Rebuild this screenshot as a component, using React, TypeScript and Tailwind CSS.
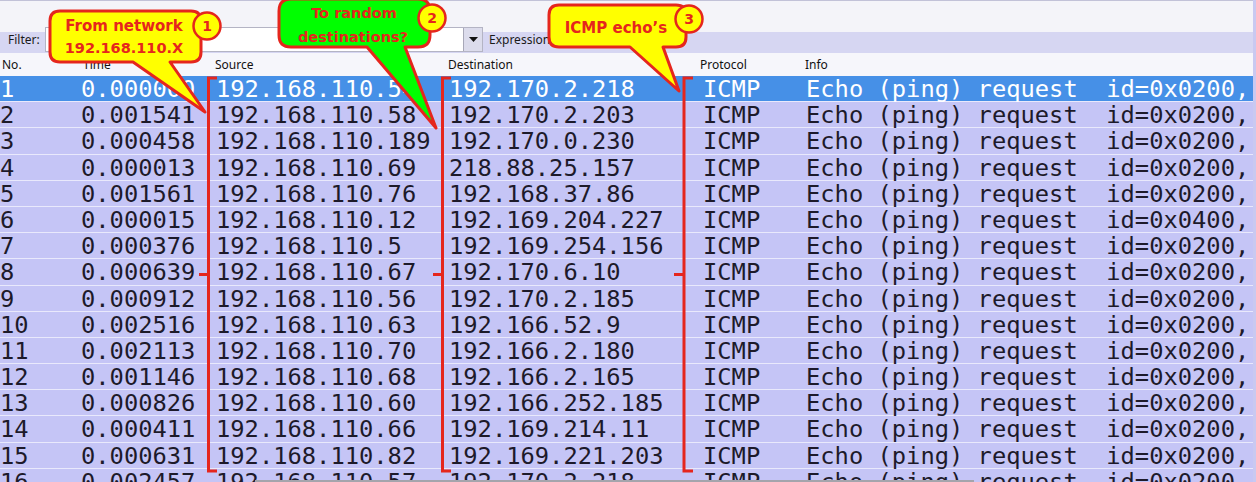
import React from "react";

interface Packet {
  no: number;
  time: string;
  source: string;
  destination: string;
  id: string;
}

const packets: Packet[] = [
  { no: 1, time: "0.000000", source: "192.168.110.54", destination: "192.170.2.218", id: "0x0200" },
  { no: 2, time: "0.001541", source: "192.168.110.58", destination: "192.170.2.203", id: "0x0200" },
  { no: 3, time: "0.000458", source: "192.168.110.189", destination: "192.170.0.230", id: "0x0200" },
  { no: 4, time: "0.000013", source: "192.168.110.69", destination: "218.88.25.157", id: "0x0200" },
  { no: 5, time: "0.001561", source: "192.168.110.76", destination: "192.168.37.86", id: "0x0200" },
  { no: 6, time: "0.000015", source: "192.168.110.12", destination: "192.169.204.227", id: "0x0400" },
  { no: 7, time: "0.000376", source: "192.168.110.5", destination: "192.169.254.156", id: "0x0200" },
  { no: 8, time: "0.000639", source: "192.168.110.67", destination: "192.170.6.10", id: "0x0200" },
  { no: 9, time: "0.000912", source: "192.168.110.56", destination: "192.170.2.185", id: "0x0200" },
  { no: 10, time: "0.002516", source: "192.168.110.63", destination: "192.166.52.9", id: "0x0200" },
  { no: 11, time: "0.002113", source: "192.168.110.70", destination: "192.166.2.180", id: "0x0200" },
  { no: 12, time: "0.001146", source: "192.168.110.68", destination: "192.166.2.165", id: "0x0200" },
  { no: 13, time: "0.000826", source: "192.168.110.60", destination: "192.166.252.185", id: "0x0200" },
  { no: 14, time: "0.000411", source: "192.168.110.66", destination: "192.169.214.11", id: "0x0200" },
  { no: 15, time: "0.000631", source: "192.168.110.82", destination: "192.169.221.203", id: "0x0200" },
  { no: 16, time: "0.002457", source: "192.168.110.57", destination: "192.170.2.218", id: "0x0200" },
];

const RED = "#e5261d";

// annotation layer: speech bubbles, number badges and brackets
const Annotations = () => (
  <svg
    className="absolute inset-0 pointer-events-none"
    width={1256}
    height={482}
    viewBox="0 0 1256 482"
  >
    {/* brackets */}
    <g stroke={RED} strokeWidth={3} fill="none">
      <path d="M217 78 H208.5 V471 H217" />
      <path d="M199 274.5 H208.5" />
      <path d="M451 78 H442.5 V471 H451" />
      <path d="M433 274.5 H442.5" />
      <path d="M693 78 H684 V471 H693" />
      <path d="M674 274.5 H684" />
    </g>

    {/* bubble 1 */}
    <path
      d="M60 11 H191 Q201 11 201 21 V52 Q201 62 191 62 H170 L205 112 L133 62 H60 Q50 62 50 52 V21 Q50 11 60 11 Z"
      fill="#ffff00"
      stroke={RED}
      strokeWidth={3}
      strokeLinejoin="round"
    />
    {/* bubble 2 */}
    <path
      d="M291 -1 H418 Q430 -1 430 11 V35 Q430 47 418 47 H405 L436 128 L367 47 H291 Q279 47 279 35 V11 Q279 -1 291 -1 Z"
      fill="#00ff00"
      stroke={RED}
      strokeWidth={3}
      strokeLinejoin="round"
    />
    {/* bubble 3 */}
    <path
      d="M559 5 H676 Q686 5 686 15 V37 Q686 47 676 47 H663 L679 91 L630 47 H559 Q549 47 549 37 V15 Q549 5 559 5 Z"
      fill="#ffff00"
      stroke={RED}
      strokeWidth={3}
      strokeLinejoin="round"
    />

    <g
      fill={RED}
      fontFamily="'DejaVu Sans', sans-serif"
      fontWeight="bold"
      textAnchor="middle"
    >
      <text x={124} y={31} fontSize={15}>From network</text>
      <text x={124} y={53} fontSize={14.5}>192.168.110.X</text>
      <text x={354} y={18} fontSize={14.5}>To random</text>
      <text x={353} y={42} fontSize={14.5}>destinations?</text>
      <text x={616} y={33} fontSize={15}>ICMP echo’s</text>
    </g>

    {/* number badges */}
    {[
      { n: "1", x: 207, y: 26 },
      { n: "2", x: 432, y: 18 },
      { n: "3", x: 689, y: 19 },
    ].map((b) => (
      <g key={b.n}>
        <circle cx={b.x} cy={b.y} r={13.5} fill="#ffff00" stroke={RED} strokeWidth={2.5} />
        <text
          x={b.x}
          y={b.y + 5}
          fill={RED}
          fontFamily="'DejaVu Sans', sans-serif"
          fontWeight="bold"
          fontSize={14}
          textAnchor="middle"
        >
          {b.n}
        </text>
      </g>
    ))}
  </svg>
);

const App = () => {
  return (
    <div className="relative w-[1256px] h-[482px] overflow-hidden bg-[#f4f4f9] font-['Noto_Sans',sans-serif]">
      {/* TOP BAND */}
      <div className="h-[27px] border-t border-[#c2c2d8]" />

      {/* FILTER BAR */}
      <div className="h-[26px] flex items-start bg-[linear-gradient(to_bottom,#f4f4f9_5px,#d6d6f2_5px)]">
        <span className="w-[45px] pl-[8px] pt-[6px] text-[12px] leading-[14px] text-[#1a1a1a]">
          Filter:
        </span>
        <div className="w-[438px] h-[25px] flex bg-white border border-[#b4b4c4]">
          <div className="flex-1" />
          <div className="w-[19px] h-full flex items-center justify-center bg-[#dcdcec] border-l border-[#a8a8b8]">
            <svg width="9" height="6" viewBox="0 0 9 6">
              <path d="M0 0 H9 L4.5 5 Z" fill="#111" />
            </svg>
          </div>
        </div>
        <span className="pl-[6px] pt-[6px] text-[12px] leading-[14px] text-[#1a1a1a]">
          Expression...
        </span>
        <span className="pl-[60px] pt-[6px] text-[12px] leading-[14px] text-[#a0a0b0]">
          Clear
        </span>
      </div>

      {/* HEADER */}
      <div className="h-[23px] flex items-center bg-[#f6f6fb] text-[12px] text-[#111]">
        <div className="w-[81px] pl-[2px]">No.</div>
        <div className="w-[133px] pl-[2px]">Time</div>
        <div className="w-[232px] pl-[1px]">Source</div>
        <div className="w-[252px] pl-[2px]">Destination</div>
        <div className="w-[105px] pl-[2px]">Protocol</div>
        <div className="flex-1 pl-[2px]">Info</div>
      </div>

      {/* ROWS */}
      <div className="font-['DejaVu_Sans_Mono',monospace] text-[23.75px] leading-[26.2px]">
        {packets.map((p) => (
          <div
            key={p.no}
            className={`h-[26.2px] flex whitespace-pre border-b border-[#e9e9fc] ${
              p.no === 1 ? "bg-[#4690e7] text-white" : "bg-[#c5c5f6] text-[#1d1a2a]"
            }`}
          >
            <div className="w-[81px] shrink-0">{p.no}</div>
            <div className="w-[133px] shrink-0">{p.time}</div>
            <div className="w-[232px] shrink-0 pl-[2px]">{p.source}</div>
            <div className="w-[252px] shrink-0 pl-[3px]">{p.destination}</div>
            <div className="w-[105px] shrink-0 pl-[5px]">ICMP</div>
            <div className="flex-1 pl-[3px]">
              {`Echo (ping) request  id=${p.id},`}
            </div>
          </div>
        ))}
      </div>

      {/* right edge strip */}
      <div className="absolute top-0 right-0 w-[3px] h-full bg-[#c9c9f1]" />

      {/* horizontal scrollbar thumb */}
      <div className="absolute left-[255px] bottom-0 w-[719px] h-[2px] bg-[#a4a4ac]" />

      <Annotations />
    </div>
  );
};

export default App;
